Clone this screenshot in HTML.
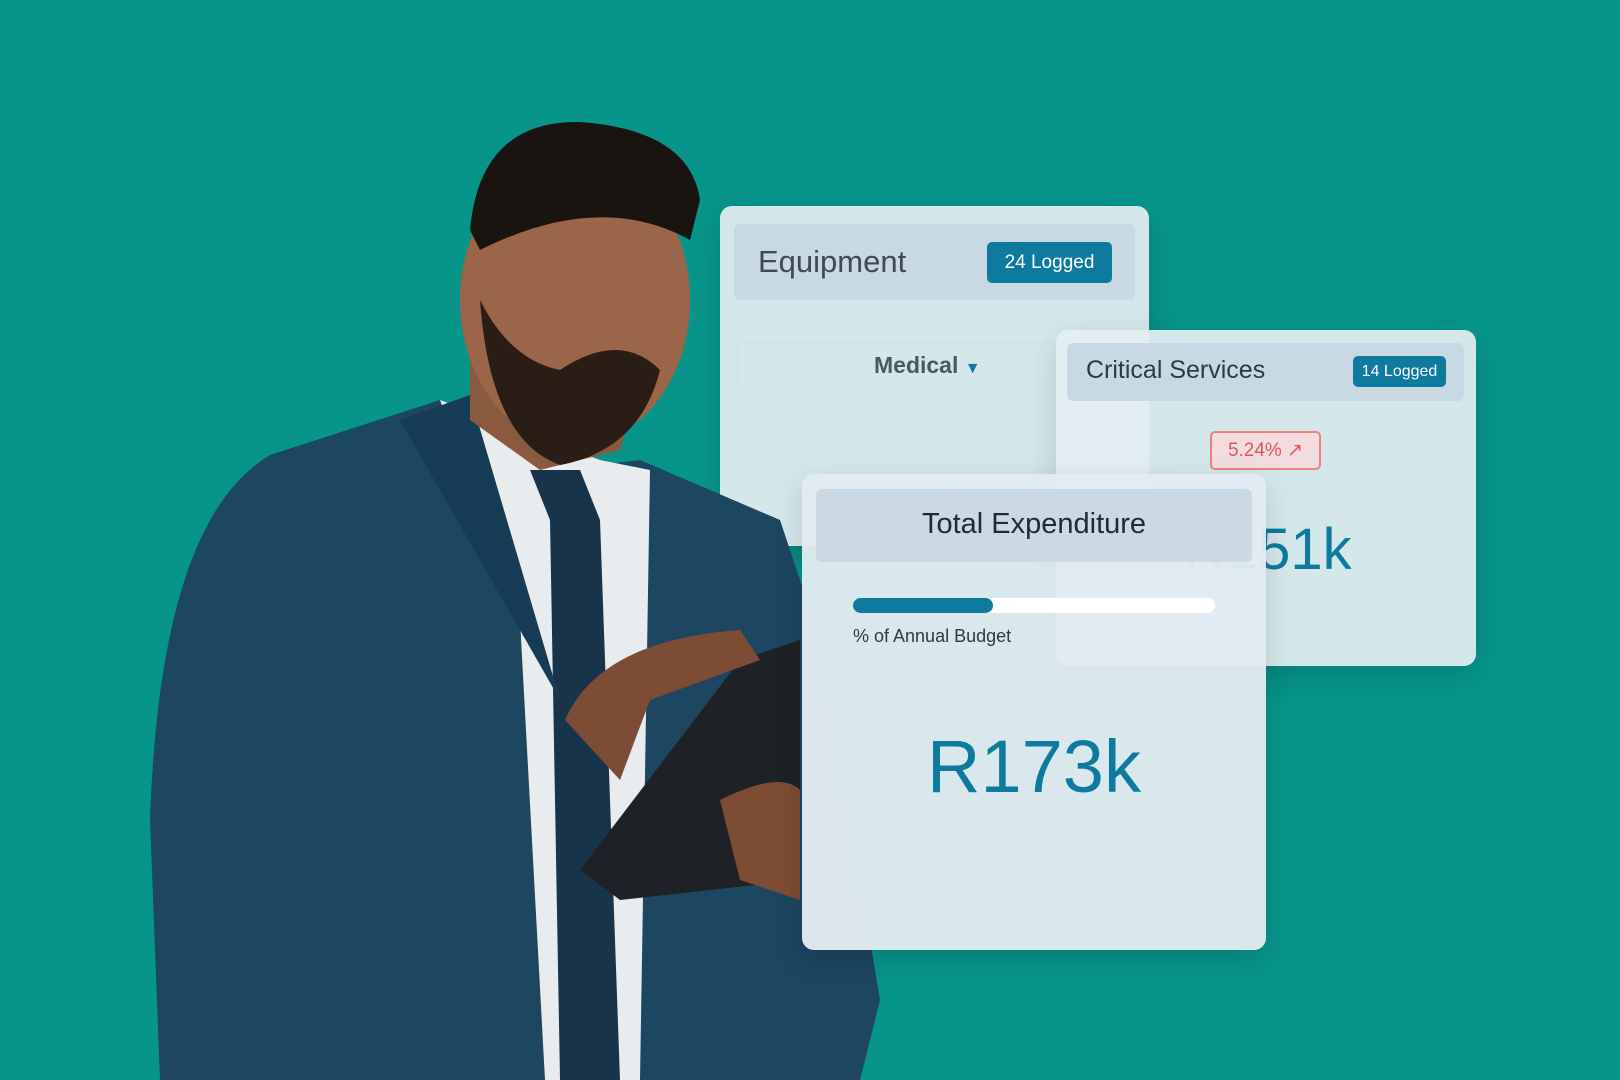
<!DOCTYPE html>
<html><head><meta charset="utf-8"><style>
*{margin:0;padding:0;box-sizing:border-box}
body{width:1620px;height:1080px;overflow:hidden;background:#07958a;font-family:"Liberation Sans",sans-serif;position:relative}
.card{position:absolute;border-radius:12px;background:rgba(228,238,243,.93);box-shadow:0 10px 30px rgba(0,0,0,.15)}
.hdr{position:absolute;border-radius:6px;background:#c9d9e3}
.badge{position:absolute;background:#0e7a9e;color:#fff;border-radius:5px;font-size:16px;display:flex;align-items:center;justify-content:center}
</style></head><body>
<div class="card" style="left:720px;top:206px;width:429px;height:340px">
 <div class="hdr" style="left:14px;top:18px;width:401px;height:76px"></div>
 <div style="position:absolute;left:38px;top:38px;font-size:31px;color:#3d4b57">Equipment</div>
 <div class="badge" style="left:267px;top:36px;width:125px;height:41px;font-size:19px">24 Logged</div>
 <div style="position:absolute;left:16px;top:136px;width:340px;height:51px;border:2px solid #d7e2e8;border-radius:5px"></div>
 <div style="position:absolute;left:154px;top:146px;font-size:23px;color:#4a5863;font-weight:bold">Medical <span style="font-size:16px;color:#0e7a9e">▼</span></div>
 <div style="position:absolute;left:120px;top:255px;font-size:70px;color:#c0d6e0">R22k</div>
</div>
<svg width="1620" height="1080" style="position:absolute;left:0;top:0">
<path d="M160 1080 L150 820 Q160 520 270 455 L440 400 L560 470 L640 460 L780 520 L820 640 L880 1000 L860 1080 Z" fill="#1d4661"/>
<path d="M440 400 L520 620 L545 1080 L640 1080 L650 470 L600 460 Z" fill="#e8ecef"/>
<path d="M530 470 L580 470 L600 520 L620 1080 L560 1080 L550 520 Z" fill="#17344a"/>
<path d="M400 420 L470 395 L560 700 Z" fill="#163b55"/>
<path d="M470 330 L470 420 L540 470 L620 450 L640 380 Z" fill="#8a5a3e"/>
<ellipse cx="575" cy="300" rx="115" ry="145" fill="#9a6548"/>
<path d="M470 230 Q480 120 580 122 Q690 130 700 200 L690 240 Q600 190 480 250 Z" fill="#1a1410"/>
<path d="M480 300 Q490 440 560 465 Q640 450 660 370 Q620 330 560 370 Q510 360 480 300Z" fill="#2a1d16"/>
<path d="M580 870 L740 660 L800 640 L800 880 L620 900 Z" fill="#1e2226"/>
<path d="M565 720 Q600 640 740 630 L760 660 L650 700 L620 780 Z" fill="#7d4c34"/>
<path d="M720 800 Q780 770 800 790 L800 900 L740 880 Z" fill="#7d4c34"/>
</svg>

<div class="card" style="left:1056px;top:330px;width:420px;height:336px">
 <div class="hdr" style="left:11px;top:13px;width:397px;height:58px"></div>
 <div style="position:absolute;left:30px;top:26px;font-size:25px;color:#2a3a46">Critical Services</div>
 <div class="badge" style="left:297px;top:26px;width:93px;height:31px">14 Logged</div>
 <div style="position:absolute;left:154px;top:101px;width:111px;height:39px;border:2px solid #f08080;border-radius:5px;background:#f3dcdf;color:#e05656;font-size:19px;display:flex;align-items:center;justify-content:center">5.24% ↗</div>
 <div style="position:absolute;left:128px;top:186px;font-size:58px;color:#0e7a9e">R151k</div>
</div>

<div class="card" style="left:802px;top:474px;width:464px;height:476px;background:rgba(226,235,241,.96)">
 <div class="hdr" style="left:14px;top:15px;width:436px;height:73px;background:#cad9e3"></div>
 <div style="position:absolute;left:0;width:464px;top:34px;text-align:center;font-size:29px;color:#1f2a33">Total Expenditure</div>
 <div style="position:absolute;left:51px;top:124px;width:362px;height:15px;border-radius:8px;background:#fff"></div>
 <div style="position:absolute;left:51px;top:124px;width:140px;height:15px;border-radius:8px;background:#0e7a9e"></div>
 <div style="position:absolute;left:51px;top:152px;font-size:18px;color:#2a3a46">% of Annual Budget</div>
 <div style="position:absolute;left:0;width:464px;top:250px;text-align:center;font-size:74px;color:#0e7a9e">R173k</div>
</div>
</body></html>
